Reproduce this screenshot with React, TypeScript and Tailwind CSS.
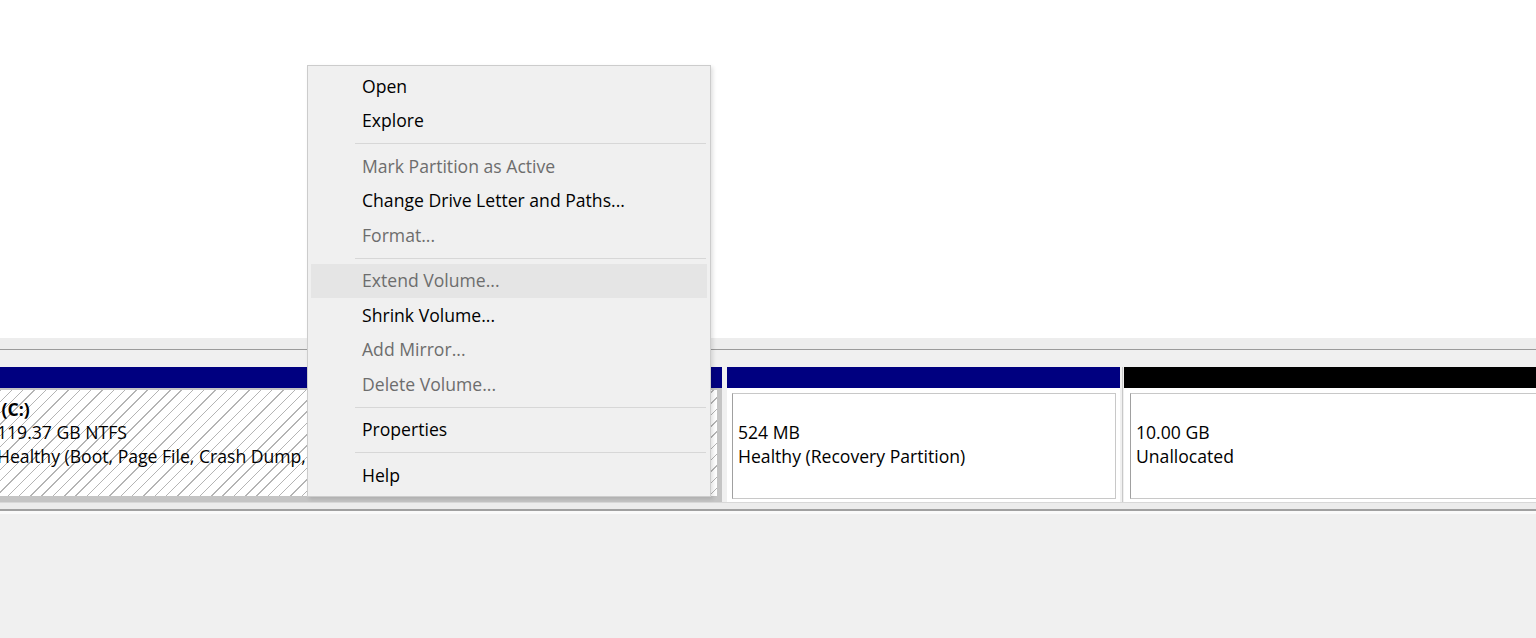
import React from "react";

type Item = { label: string; disabled?: boolean; hover?: boolean } | "sep";

const menu: Item[] = [
  { label: "Open" },
  { label: "Explore" },
  "sep",
  { label: "Mark Partition as Active", disabled: true },
  { label: "Change Drive Letter and Paths..." },
  { label: "Format...", disabled: true },
  "sep",
  { label: "Extend Volume...", disabled: true, hover: true },
  { label: "Shrink Volume..." },
  { label: "Add Mirror...", disabled: true },
  { label: "Delete Volume...", disabled: true },
  "sep",
  { label: "Properties" },
  "sep",
  { label: "Help" },
];

const font = { fontFamily: '"Segoe UI", "Open Sans", "Noto Sans", sans-serif' };

function ContextMenu() {
  return (
    <div className="absolute left-[307px] top-[65px] w-[404px] border border-[#cccccc] bg-[#f0f0f0] px-[3px] py-[3px] shadow-[2px_2px_4px_rgba(0,0,0,0.12)]">
      {menu.map((m, i) =>
        m === "sep" ? (
          <div key={i} className="flex h-[11px] items-center pl-[44px] pr-[1px]">
            <div className="h-px w-full bg-[#d7d7d7]" />
          </div>
        ) : (
          <div
            key={i}
            className={`flex h-[34.5px] items-center pl-[51px] pb-[1px] text-[17.6px] ${
              m.disabled ? "text-[#6d6d6d]" : "text-black"
            } ${m.hover ? "bg-[#e5e5e5]" : ""}`}
          >
            {m.label}
          </div>
        )
      )}
    </div>
  );
}

export default function App() {
  return (
    <div className="relative flex h-[638px] w-[1536px] flex-col overflow-hidden bg-[#f0f0f0]" style={font}>
      {/* list pane */}
      <div className="h-[338px] bg-white" />
      {/* splitter */}
      <div className="h-[11px] bg-[#ededed]" />
      <div className="h-px bg-[#9a9a9a]" />
      <div className="h-[17px] bg-[#f0f0f0]" />

      {/* disk row */}
      <div className="flex h-[136px] border-b border-[#d8d8d8] text-[17.6px] leading-[23.5px] text-black">
        {/* C: selected */}
        <div className="ml-[-10px] flex w-[732px] shrink-0 flex-col">
          <div className="h-[21px] bg-[#000080]" />
          <div className="h-[115px] overflow-hidden border-t-2 border-r-[5px] border-b-[6px] border-[#c4c4c4] bg-[repeating-linear-gradient(135deg,#ffffff_0px,#ffffff_7px,#b4b4b4_7px,#b4b4b4_8px)] pl-[7px] pt-[8px]">
            <div className="whitespace-pre font-bold">{"\u00a0(C:)"}</div>
            <div className="whitespace-nowrap">119.37 GB NTFS</div>
            <div className="whitespace-nowrap">Healthy (Boot, Page File, Crash Dump, Primary Partition)</div>
          </div>
        </div>

        <div className="w-[5px] shrink-0" />

        {/* recovery */}
        <div className="flex w-[393px] shrink-0 flex-col">
          <div className="h-[21px] bg-[#000080]" />
          <div className="h-[115px] bg-white pb-[3px] pl-[5px] pr-[4px] pt-[5px]">
            <div className="h-full border border-[#c8c8c8] border-l-[#a0a0a0] pl-[5px] pt-[4px]">
              <div className="h-[23.5px]" />
              <div>524 MB</div>
              <div className="whitespace-nowrap">Healthy (Recovery Partition)</div>
            </div>
          </div>
        </div>

        <div className="flex w-[4px] shrink-0 justify-center">
          <div className="h-full w-px bg-[#c8c8c8]" />
        </div>

        {/* unallocated */}
        <div className="flex w-[430px] shrink-0 flex-col">
          <div className="h-[21px] bg-black" />
          <div className="h-[115px] bg-white pb-[3px] pl-[6px] pr-[4px] pt-[5px]">
            <div className="h-full border border-[#c8c8c8] border-l-[#a0a0a0] pl-[5px] pt-[4px]">
              <div className="h-[23.5px]" />
              <div>10.00 GB</div>
              <div>Unallocated</div>
            </div>
          </div>
        </div>
      </div>

      <div className="h-[6px] bg-[#ececec]" />
      <div className="h-[2px] bg-[#a0a0a0]" />
      <div className="h-[3px] bg-[#fafafa]" />
      <div className="flex-1 bg-[#f0f0f0]" />

      <ContextMenu />
    </div>
  );
}
